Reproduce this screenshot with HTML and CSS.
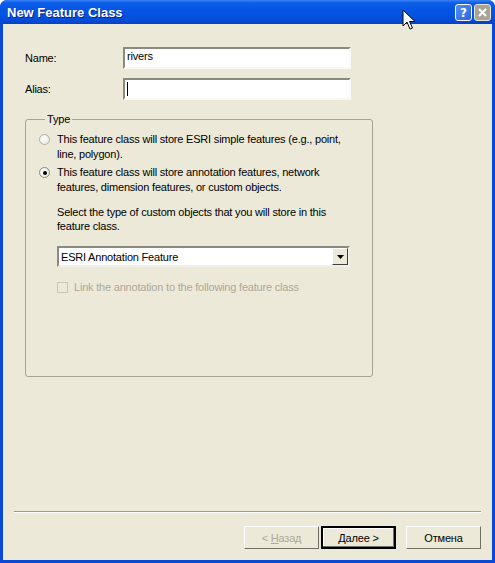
FILE: index.html
```html
<!DOCTYPE html>
<html>
<head>
<meta charset="utf-8">
<link rel="stylesheet" href="styles.css">
</head>
<body>
<div class="window">
  <div class="titlebar">
    <span class="title">New Feature Class</span>
    <div class="tb-buttons">
      <span class="tb-btn help">?</span>
      <span class="tb-btn close">
        <svg width="9" height="9" viewBox="0 0 9 9"><path d="M1 1L8 8M8 1L1 8" stroke="#fff" stroke-width="2"/></svg>
      </span>
    </div>
  </div>
  <div class="client">
    <div class="fields">
      <label class="lbl">Name:</label>
      <div class="input"><span class="val">rivers</span></div>
      <label class="lbl">Alias:</label>
      <div class="input"><span class="caret"></span></div>
    </div>
    <fieldset class="group">
      <legend class="legend">Type</legend>
      <div class="option">
        <span class="radio"></span>
        <span class="opt-text">This feature class will store ESRI simple features (e.g., point, line, polygon).</span>
      </div>
      <div class="option">
        <span class="radio checked"><span class="dot"></span></span>
        <span class="opt-text">This feature class will store annotation features, network features, dimension features, or custom objects.</span>
      </div>
      <div class="sub">
        <p class="sub-text">Select the type of custom objects that you will store in this feature class.</p>
        <div class="combo">
          <span class="combo-val">ESRI Annotation Feature</span>
          <span class="combo-btn"><svg width="7" height="4" viewBox="0 0 7 4"><path d="M0 0H7L3.5 4Z" fill="#000"/></svg></span>
        </div>
        <div class="check-row">
          <span class="checkbox"></span>
          <span class="check-text">Link the annotation to the following feature class</span>
        </div>
      </div>
    </fieldset>
    <div class="spacer"></div>
    <div class="sep"></div>
    <div class="buttons">
      <span class="btn disabled"><span>&lt; <u>Н</u>азад</span></span>
      <span class="btn default"><span><u>Д</u>алее &gt;</span></span>
      <span class="btn cancel">Отмена</span>
    </div>
  </div>
  <svg class="pointer" width="14" height="22" viewBox="0 0 14 22">
    <path d="M1 1V17L5 13L8 20L10.5 19L7.5 12.5H13Z" fill="#fff" stroke="#000" stroke-width="1"/>
  </svg>
</div>
</body>
</html>
```
FILE: styles.css
```css
* { box-sizing: border-box; }
html, body { margin: 0; padding: 0; }
body {
  width: 495px;
  height: 563px;
  overflow: hidden;
  font-family: "Liberation Sans", Arial, sans-serif;
  font-size: 11px;
  letter-spacing: -0.2px;
  color: #000;
}
.window {
  position: relative;
  width: 495px;
  height: 563px;
  background: #0a48d8;
  display: flex;
  flex-direction: column;
  padding: 0 3px 3px 3px;
  border-radius: 7px 7px 0 0;
}
.titlebar {
  height: 24px;
  display: flex;
  align-items: center;
  justify-content: space-between;
  margin: 0 -3px;
  padding: 0 4px 0 7px;
  border-radius: 7px 7px 0 0;
  background: linear-gradient(to bottom, #3a80f3 0px, #0a5ee8 3px, #0555e5 10px, #0450dd 18px, #0342c8 24px);
}
.title {
  color: #fff;
  font-family: "Liberation Sans", sans-serif;
  font-weight: bold;
  font-size: 13px;
  letter-spacing: 0;
  text-shadow: 1px 1px 0 #0a1e8a;
}
.tb-buttons { display: flex; gap: 2px; padding-top: 1px; }
.tb-btn {
  width: 17px;
  height: 17px;
  border: 1px solid #fff;
  border-radius: 3px;
  display: flex;
  align-items: center;
  justify-content: center;
  color: #fff;
  font-family: "DejaVu Sans", sans-serif;
  font-weight: bold;
  font-size: 12px;
}
.help { background: linear-gradient(135deg, #5a8cf5, #2a63e0); }
.close { background: #a8a49a; border-color: #e8e4d8; }
.client {
  flex: 1;
  background: #ece9d8;
  display: flex;
  flex-direction: column;
  padding: 23px 11px 11px 22px;
}
.fields {
  display: grid;
  grid-template-columns: 98px 228px;
  row-gap: 9px;
  align-items: center;
}
.lbl { line-height: 13px; padding-top: 1px; }
.input {
  height: 22px;
  background: #fff;
  border: 2px solid;
  border-color: #8c8a80 #f8f8f4 #f8f8f4 #8c8a80;
  display: flex;
  align-items: center;
  padding-left: 2px;
}
.val { line-height: 13px; margin-top: -4px; }
.caret { width: 1px; height: 14px; background: #000; }
.group {
  margin: 13px 0 0 0;
  width: 348px;
  height: 264px;
  border: 1px solid #a6a496;
  border-radius: 3px;
  padding: 6px 0 0 13px;
}
.legend {
  padding: 0 2px;
  margin-left: 6px;
  line-height: 13px;
}
.option {
  display: flex;
  gap: 7px;
  margin-bottom: 3px;
}
.radio {
  width: 11px;
  height: 11px;
  flex: none;
  border-radius: 50%;
  border: 1px solid #b0b0a8;
  background: radial-gradient(circle at 40% 40%, #fff 0, #e8e8e0 80%);
  margin-top: 2px;
  display: flex;
  align-items: center;
  justify-content: center;
}
.radio.checked { border-color: #8a8a80; }
.dot { width: 4px; height: 4px; border-radius: 50%; background: #000; }
.opt-text { width: 295px; line-height: 15px; }
.sub { padding-left: 18px; }
.sub-text { margin: 10px 0 0 0; width: 295px; line-height: 14px; }
.combo {
  margin-top: 13px;
  width: 293px;
  height: 21px;
  background: #fff;
  border-color: #8c8a80 #f0f0ea #f0f0ea #8c8a80;
  border-style: solid;
  border-width: 2px;
  display: flex;
  align-items: center;
  justify-content: space-between;
}
.combo-val { padding-left: 2px; font-size: 11px; }
.combo-btn {
  width: 16px;
  height: 17px;
  background: #ece9d8;
  border: 1px solid;
  border-color: #fff #404040 #404040 #fff;
  display: flex;
  align-items: center;
  justify-content: center;
}
.check-row { display: flex; align-items: center; gap: 6px; margin-top: 14px; }
.checkbox {
  width: 11px;
  height: 11px;
  border: 1px solid #c8c6b8;
  background: #ece9d8;
}
.check-text { color: #aca899; }
.spacer { flex: 1; }
.sep {
  height: 2px;
  border-top: 1px solid #9d9a8c;
  border-bottom: 1px solid #fff;
  margin: 0 0 13px -11px;
}
.buttons {
  display: flex;
  justify-content: flex-end;
  gap: 2px;
}
.btn {
  width: 75px;
  height: 23px;
  display: flex;
  align-items: center;
  justify-content: center;
  border: 1px solid;
  border-color: #fff #716f64 #716f64 #fff;
  background: #ece9d8;
}
.btn.disabled { color: #aca899; }
.btn.default { border: 2px solid #000; box-shadow: inset -1px -1px 0 #716f64, inset 1px 1px 0 #fff; }
.btn.cancel { margin-left: 8px; }
.pointer { position: absolute; left: 402px; top: 9px; }
```
